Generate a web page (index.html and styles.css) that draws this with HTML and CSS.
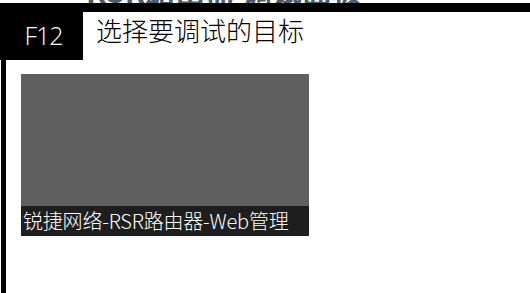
FILE: index.html
```html
<!DOCTYPE html>
<html lang="zh">
<head>
<meta charset="utf-8">
<link rel="stylesheet" href="styles.css">
</head>
<body>
<div class="strip"><span class="strip-text">RSR路由器 调试面板</span></div>
<div class="frame">
  <div class="header">
    <div class="key">F12</div>
    <div class="title">选择要调试的目标</div>
  </div>
  <div class="targets">
    <div class="card">
      <div class="thumb"></div>
      <div class="caption">锐捷网络-RSR路由器-Web管理</div>
    </div>
  </div>
</div>
</body>
</html>
```
FILE: styles.css
```css
html, body {
  margin: 0;
  padding: 0;
  background: #fff;
  overflow: hidden;
}
body {
  width: 530px;
  height: 293px;
  font-family: "Noto Sans", "Noto Sans CJK SC", sans-serif;
}
.strip {
  height: 3px;
  overflow: hidden;
  padding-left: 86px;
}
.strip-text {
  display: block;
  margin-top: -25px;
  font: bold 30px/30px "Noto Sans CJK SC", sans-serif;
  color: #4e5b68;
  white-space: nowrap;
}
.frame {
  margin-left: 1px;
  border-top: 9px solid #000;
  border-left: 5px solid #000;
  height: 281px;
}
.header {
  display: flex;
  align-items: flex-start;
  height: 48px;
}
.key {
  margin-left: -6px;
  margin-top: -9px;
  width: 83px;
  height: 57px;
  background: #000;
  color: #fff;
  font: 300 25px/1 "Open Sans", "Noto Sans", sans-serif;
  display: flex;
  align-items: center;
  justify-content: center;
  padding: 7px 0 0 4px;
  box-sizing: border-box;
  letter-spacing: -1px;
}
.title {
  margin-left: 13px;
  margin-top: 3px;
  font: 300 26px/30px "Noto Sans CJK SC", sans-serif;
  color: #000;
  white-space: nowrap;
}
.targets {
  padding: 14px 0 0 15px;
}
.card {
  width: 288px;
  display: flex;
  flex-direction: column;
}
.thumb {
  height: 132px;
  background: #5f5f5f;
}
.caption {
  height: 30px;
  background: #1e1e1e;
  color: #fff;
  font: 300 20px/29px "Noto Sans CJK SC", sans-serif;
  padding-left: 2px;
  letter-spacing: -0.2px;
  white-space: nowrap;
  overflow: hidden;
}
```
